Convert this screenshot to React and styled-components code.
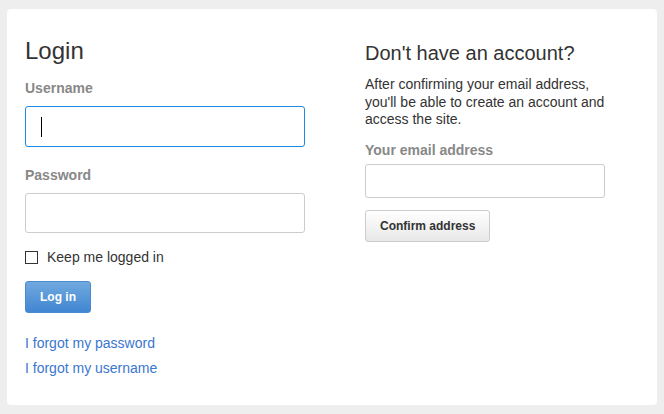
import React from "react";
import styled, { createGlobalStyle } from "styled-components";

const Global = createGlobalStyle`
  html, body { margin: 0; padding: 0; background: #eeeeee; }
  body { font-family: "Liberation Sans", Arial, sans-serif; color: #333; }
  * { box-sizing: border-box; }
`;

const Page = styled.div`
  width: 664px;
  height: 414px;
  padding: 9px 7px 9px 7px;
`;

const Card = styled.div`
  width: 650px;
  height: 396px;
  background: #fff;
  border-radius: 4px;
  padding: 28px 18px;
  display: grid;
  grid-template-columns: 340px 1fr;
`;

const Column = styled.div`
  display: flex;
  flex-direction: column;
  align-items: flex-start;
`;

const Heading = styled.h2`
  margin: 0;
  font-weight: normal;
  font-size: ${(p) => p.$size}px;
  line-height: ${(p) => p.$lh}px;
  color: #333;
`;

const Label = styled.label`
  display: block;
  margin-top: ${(p) => p.$mt}px;
  font-size: 14px;
  line-height: 20px;
  font-weight: bold;
  color: #888;
`;

const InputWrap = styled.div`
  position: relative;
  margin-top: ${(p) => p.$mt}px;
  width: ${(p) => p.$w}px;
`;

const Input = styled.div`
  width: 100%;
  height: ${(p) => p.$h}px;
  border: 1px solid ${(p) => (p.$focus ? "#1a8be6" : "#cccccc")};
  border-radius: 3px;
  background: #fff;
`;

const Caret = styled.span`
  position: absolute;
  left: 16px;
  top: 11px;
  width: 1px;
  height: 20px;
  background: #000;
`;

const CheckRow = styled.div`
  display: flex;
  align-items: center;
  margin-top: 14px;
  font-size: 14px;
  line-height: 20px;
  color: #333;
`;

const Box = styled.span`
  width: 13px;
  height: 13px;
  border: 1px solid #333;
  margin-right: 9px;
  background: #fff;
`;

const Button = styled.button`
  margin-top: ${(p) => p.$mt}px;
  height: 32px;
  padding: 0 14px;
  font-family: "Liberation Sans", Arial, sans-serif;
  font-size: 12px;
  font-weight: bold;
  border-radius: 3px;
  cursor: pointer;
  ${(p) =>
    p.$primary
      ? `
    color: #fff;
    border: 1px solid #4a8ad3;
    background: linear-gradient(#70a9de, #4186d2);
  `
      : `
    color: #333;
    border: 1px solid #cccccc;
    background: linear-gradient(#ffffff, #e8e8e8);
  `}
`;

const Links = styled.div`
  margin-top: 20px;
  display: flex;
  flex-direction: column;
  gap: 5px;
`;

const Link = styled.a`
  font-size: 14px;
  line-height: 20px;
  color: #3b77cf;
  text-decoration: none;
`;

const Text = styled.p`
  margin: 7px 0 0;
  width: 252px;
  font-size: 14px;
  line-height: 17.5px;
  color: #333;
`;

export default function App() {
  return (
    <>
      <Global />
      <Page>
        <Card>
          <Column>
            <Heading $size={24} $lh={28}>Login</Heading>
            <Label $mt={13}>Username</Label>
            <InputWrap $mt={8} $w={280}>
              <Input $h={41} $focus />
              <Caret />
            </InputWrap>
            <Label $mt={18}>Password</Label>
            <InputWrap $mt={8} $w={280}>
              <Input $h={40} />
            </InputWrap>
            <CheckRow>
              <Box />
              Keep me logged in
            </CheckRow>
            <Button $primary $mt={14}>Log in</Button>
            <Links>
              <Link href="#">I forgot my password</Link>
              <Link href="#">I forgot my username</Link>
            </Links>
          </Column>
          <Column>
            <Heading $size={20} $lh={32}>Don't have an account?</Heading>
            <Text>
              After confirming your email address, you'll be able to create an
              account and access the site.
            </Text>
            <Label $mt={11}>Your email address</Label>
            <InputWrap $mt={4} $w={240}>
              <Input $h={34} />
            </InputWrap>
            <Button $mt={12}>Confirm address</Button>
          </Column>
        </Card>
      </Page>
    </>
  );
}
